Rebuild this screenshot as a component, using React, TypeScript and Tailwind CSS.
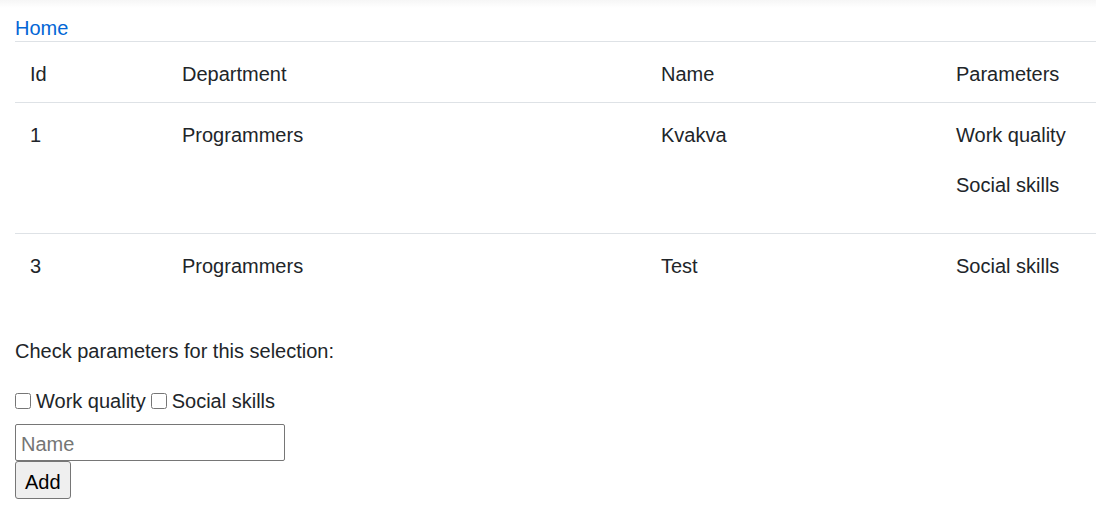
export default function App() {
  const rows = [
    { id: 1, department: "Programmers", name: "Kvakva", parameters: ["Work quality", "Social skills"] },
    { id: 3, department: "Programmers", name: "Test", parameters: ["Social skills"] },
  ];

  return (
    <div className="min-h-[513px] bg-white text-[20px] leading-[30px] text-[#212529] font-['Segoe_UI','Liberation_Sans',Arial,sans-serif]">
      {/* navbar shadow peeking from above */}
      <div className="h-[8px] bg-gradient-to-b from-[#f6f6f6] to-white" />

      <div className="pl-[15px]">
        <div className="h-[33px] pt-[5px]">
          <a href="#" className="text-[#0366d6] leading-[30px]">
            Home
          </a>
        </div>

        <table className="w-full table-fixed border-collapse text-left">
          <colgroup>
            <col className="w-[152px]" />
            <col className="w-[479px]" />
            <col className="w-[295px]" />
            <col />
          </colgroup>
          <thead>
            <tr className="border-t border-[#dee2e6]">
              <th className="px-[15px] pt-[17px] pb-[13px] font-normal align-top">Id</th>
              <th className="px-[15px] pt-[17px] pb-[13px] font-normal align-top">Department</th>
              <th className="px-[15px] pt-[17px] pb-[13px] font-normal align-top">Name</th>
              <th className="px-[15px] pt-[17px] pb-[13px] font-normal align-top whitespace-nowrap">Parameters</th>
            </tr>
          </thead>
          <tbody>
            {rows.map((r) => (
              <tr key={r.id} className="border-t border-[#dee2e6]">
                <td className="px-[15px] pt-[17px] pb-[13px] align-top">{r.id}</td>
                <td className="px-[15px] pt-[17px] pb-[13px] align-top">{r.department}</td>
                <td className="px-[15px] pt-[17px] pb-[13px] align-top">{r.name}</td>
                <td className="px-[15px] pt-[17px] pb-[13px] align-top whitespace-nowrap">
                  {r.parameters.map((p) => (
                    <p key={p} className="mb-[20px]">
                      {p}
                    </p>
                  ))}
                </td>
              </tr>
            ))}
          </tbody>
        </table>

        <p className="mt-[22px] mb-[20px]">Check parameters for this selection:</p>

        <div className="flex items-center h-[30px]">
          <label className="flex items-center">
            <input type="checkbox" className="m-0 w-[16px] h-[16px] mr-[5px]" />
            Work quality
          </label>
          <label className="flex items-center ml-[5px]">
            <input type="checkbox" className="m-0 w-[16px] h-[16px] mr-[5px]" />
            Social skills
          </label>
        </div>

        <div className="mt-[8px]">
          <input
            type="text"
            placeholder="Name"
            className="block w-[270px] h-[37px] border border-[#767676] rounded-[2px] px-[5px] pt-[3px] text-[20px] leading-[30px] placeholder:text-[#757575] outline-none"
          />
          <button className="block h-[38px] px-[9px] pt-[3px] bg-[#efefef] border border-[#767676] rounded-[3px] text-black text-[20px] leading-[30px]">
            Add
          </button>
        </div>
      </div>
    </div>
  );
}
